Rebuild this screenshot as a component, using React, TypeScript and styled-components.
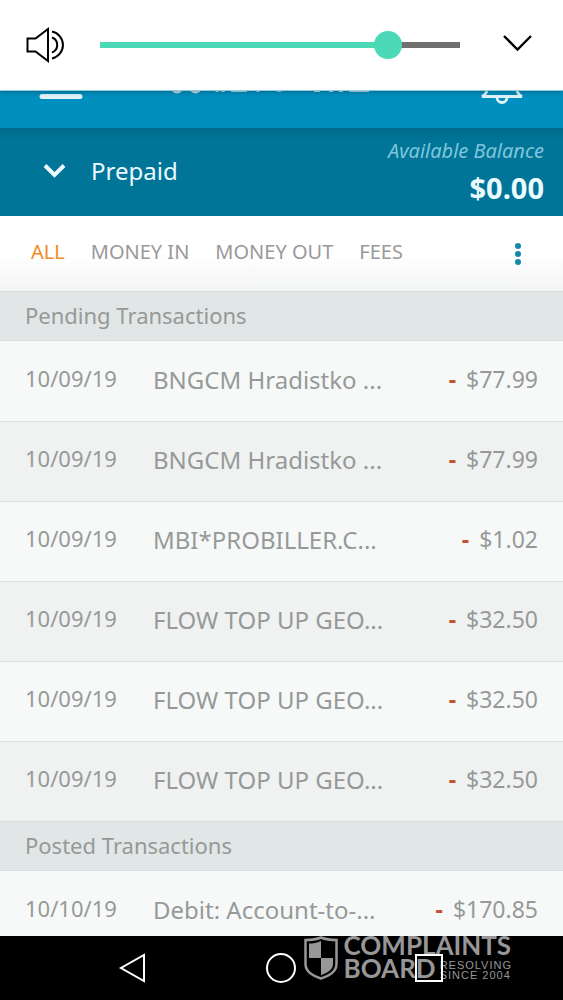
import React, { useState } from "react";
import styled, { createGlobalStyle } from "styled-components";

const GlobalStyle = createGlobalStyle`
  *, *::before, *::after { box-sizing: border-box; }
  body {
    margin: 0;
    background: #000;
    font-family: "Noto Sans", "Open Sans", sans-serif;
    color: #979998;
  }
  button { border: 0; padding: 0; background: none; font: inherit; color: inherit; cursor: pointer; }
  svg { display: block; }
`;

const Screen = styled.div`
  position: relative;
  display: flex;
  flex-direction: column;
  height: 100vh;
  overflow: hidden;
`;

const VolumePanel = styled.div`
  position: absolute;
  inset: 0 0 auto;
  z-index: 2;
  display: flex;
  align-items: center;
  height: 91px;
  padding: 0 30px 0 25px;
  background: #fff;
  border-bottom: 1px solid #8fcbdc;
  box-shadow: 0 1px 5px rgba(0, 40, 60, 0.4);
`;

const Slider = styled.input<{ $fill: number }>`
  flex: 1;
  min-width: 0;
  height: 28px;
  margin: 0 42px 0 35px;
  appearance: none;
  background: linear-gradient(to right, #4bdab5 ${(p) => p.$fill}%, #707070 ${(p) => p.$fill}%) center / 100% 6px no-repeat;
  &::-webkit-slider-thumb {
    appearance: none;
    width: 28px;
    height: 28px;
    border-radius: 50%;
    background: #4bd9b8;
  }
`;

const AppBar = styled.header`
  display: flex;
  align-items: flex-end;
  justify-content: space-between;
  flex: none;
  height: 128px;
  padding: 0 39px 23px;
  background: #0090bf;
  color: #e3f3fa;
`;

const BarButton = styled.button`
  flex: none;
`;

const Logo = styled.svg`
  flex: none;
  margin-right: 22px;
`;

const Account = styled.section`
  display: flex;
  align-items: center;
  flex: none;
  height: 88px;
  padding: 0 19px 0 43px;
  background: linear-gradient(#00698a, #007598 12px);
  color: #eafaff;
`;

const AccountPicker = styled.button`
  display: flex;
  align-items: center;
  gap: 24px;
  flex: 1;
  padding-bottom: 2px;
  font-size: 24px;
  line-height: 32px;
`;

const Balance = styled.div`
  padding-bottom: 2px;
  text-align: right;
`;

const BalanceLabel = styled.div`
  font-size: 20px;
  line-height: 34px;
  font-style: italic;
  color: #7fc6da;
`;

const BalanceValue = styled.div`
  font-size: 29px;
  line-height: 40px;
  font-weight: 700;
`;

const Tabs = styled.nav`
  display: flex;
  align-items: center;
  gap: 26px;
  flex: none;
  height: 75px;
  padding: 0 35px 0 31px;
  background: linear-gradient(#fff 50%, #f3f4f4);
`;

const Tab = styled.button<{ $active?: boolean }>`
  padding-bottom: 4px;
  font-size: 20px;
  line-height: 28px;
  white-space: nowrap;
  color: ${(p) => (p.$active ? "#f08c1e" : "#999")};
`;

const MoreButton = styled.button`
  margin-left: auto;
`;

const Content = styled.main`
  flex: 1;
  min-height: 0;
  overflow: hidden;
  background: #f6f9f8;
`;

const SectionTitle = styled.h2`
  display: flex;
  align-items: center;
  height: 50px;
  margin: 0;
  padding: 0 25px 3px;
  border: solid #d9dedf;
  border-width: 1px 0;
  background: #e1e6e6;
  font-size: 22px;
  font-weight: 400;
`;

const Table = styled.table`
  width: 100%;
  table-layout: fixed;
  border-collapse: collapse;
`;

const Row = styled.tr`
  height: 80px;
  background: #f6f9f8;
  &:nth-child(even) { background: #eff2f1; }
  & + & { box-shadow: inset 0 1px #dde1e0; }
`;

const DateCell = styled.td`
  width: 153px;
  padding: 0 0 6px 25px;
  font-size: 22px;
`;

const NameCell = styled.td`
  padding: 0 0 4px;
  font-size: 24px;
  white-space: nowrap;
`;

const AmountCell = styled.td`
  width: 160px;
  padding: 0 25px 4px 0;
  font-size: 23px;
  text-align: right;
  white-space: nowrap;
`;

const Minus = styled.span`
  margin-right: 10px;
  font-weight: 700;
  color: #c4502f;
`;

const SystemNav = styled.footer`
  position: relative;
  isolation: isolate;
  display: flex;
  justify-content: space-between;
  align-items: center;
  flex: none;
  height: 64px;
  padding: 0 118px;
  background: #000;
`;

const Watermark = styled.div`
  position: absolute;
  top: 0;
  right: 51px;
  z-index: -1;
  display: flex;
  gap: 6px;
  color: #979797;
  pointer-events: none;
`;

const WatermarkText = styled.div`
  margin-top: -2px;
  font-family: Lato, sans-serif;
  font-size: 26px;
  line-height: 23px;
  font-weight: 700;
`;

const WatermarkLine = styled.div`
  display: flex;
  align-items: center;
  gap: 4px;
`;

const Tagline = styled.div`
  padding-top: 2px;
  font-family: "Liberation Sans", sans-serif;
  font-size: 11px;
  line-height: 10px;
  font-weight: 400;
  letter-spacing: 1px;
`;

type Entry = { date: string; name: string; amount: string };

const pending: Entry[] = [
  { date: "10/09/19", name: "BNGCM Hradistko ...", amount: "$77.99" },
  { date: "10/09/19", name: "BNGCM Hradistko ...", amount: "$77.99" },
  { date: "10/09/19", name: "MBI*PROBILLER.C...", amount: "$1.02" },
  { date: "10/09/19", name: "FLOW TOP UP GEO...", amount: "$32.50" },
  { date: "10/09/19", name: "FLOW TOP UP GEO...", amount: "$32.50" },
  { date: "10/09/19", name: "FLOW TOP UP GEO...", amount: "$32.50" },
];

const posted: Entry[] = [{ date: "10/10/19", name: "Debit: Account-to-...", amount: "$170.85" }];

const tabs = ["ALL", "MONEY IN", "MONEY OUT", "FEES"];

function Transactions({ label, entries }: { label: string; entries: Entry[] }) {
  return (
    <section>
      <SectionTitle>{label}</SectionTitle>
      <Table aria-label={label}>
        <tbody>
          {entries.map((e, i) => (
            <Row key={i}>
              <DateCell>{e.date}</DateCell>
              <NameCell>{e.name}</NameCell>
              <AmountCell>
                <Minus>-</Minus>
                {e.amount}
              </AmountCell>
            </Row>
          ))}
        </tbody>
      </Table>
    </section>
  );
}

export default function App() {
  const [volume, setVolume] = useState(33);
  const [active, setActive] = useState("ALL");
  return (
    <>
      <GlobalStyle />
      <Screen>
        <VolumePanel>
          <svg width="40" height="36" viewBox="0 0 40 36" fill="none" stroke="#000" strokeWidth="2">
            <path d="M2.500 11.500H10.500L23 2V34L10.500 24.500H2.500Z" />
            <path d="M27 10.500A8 8 0 0 1 27 25.500M27 4.500A13.800 13.800 0 0 1 27 31.500" />
          </svg>
          <Slider
            type="range"
            aria-label="Volume"
            min={0}
            max={40}
            value={volume}
            $fill={4 + (volume / 40) * 92}
            onChange={(e) => setVolume(Number(e.target.value))}
          />
          <button aria-label="Expand">
            <svg width="31" height="22" viewBox="0 0 31 22" fill="none" stroke="#000" strokeWidth="2.400">
              <path d="M2 2L15.500 15.500L29 2" />
            </svg>
          </button>
        </VolumePanel>
        <AppBar>
          <BarButton aria-label="Menu">
            <svg width="44" height="36" viewBox="0 0 44 36" stroke="currentColor" strokeWidth="5" strokeLinecap="round">
              <path d="M3 4H41M3 16H41M3 27.500H41" />
            </svg>
          </BarButton>
          <Logo width="200" height="42" viewBox="0 0 200 42" fill="#c5e1ea" aria-hidden="true">
            <circle cx="6" cy="24" r="6.500" />
            <circle cx="24.500" cy="24" r="6.500" />
            <path
              d="M46 20V29M52 20V29M60 27.500H76M87 20V29M143 27.500H149M158 27.500H162M168 27.500H172M178 27.500H198"
              stroke="#c5e1ea"
              strokeWidth="3"
            />
            <circle cx="108" cy="23" r="6" />
          </Logo>
          <BarButton aria-label="Notifications">
            <svg width="44" height="42" viewBox="0 0 44 42" fill="none" stroke="currentColor" strokeWidth="2.800" strokeLinecap="round">
              <path d="M2 33.500H42C37 31 36 27 36 22V16C36 8 30 3 22 3S8 8 8 16V22C8 27 7 31 2 33.500ZM17 34.500A5 5 0 0 0 27 34.500" />
            </svg>
          </BarButton>
        </AppBar>
        <Account>
          <AccountPicker>
            <svg width="24" height="16" viewBox="0 0 24 16" fill="none" stroke="currentColor" strokeWidth="4">
              <path d="M2 2.500L11.500 12L21 2.500" />
            </svg>
            Prepaid
          </AccountPicker>
          <Balance>
            <BalanceLabel>Available Balance</BalanceLabel>
            <BalanceValue>$0.00</BalanceValue>
          </Balance>
        </Account>
        <Tabs>
          {tabs.map((t) => (
            <Tab key={t} $active={t === active} onClick={() => setActive(t)}>
              {t}
            </Tab>
          ))}
          <MoreButton aria-label="More">
            <svg width="20" height="24" viewBox="0 0 20 24" fill="#1489ab">
              <circle cx="10" cy="4" r="3" />
              <circle cx="10" cy="12" r="3" />
              <circle cx="10" cy="20" r="3" />
            </svg>
          </MoreButton>
        </Tabs>
        <Content>
          <Transactions label="Pending Transactions" entries={pending} />
          <Transactions label="Posted Transactions" entries={posted} />
        </Content>
        <SystemNav>
          <Watermark>
            <svg width="34" height="44" viewBox="0 0 34 44" fill="none" stroke="currentColor" strokeWidth="2.500">
              <path d="M17 1.500C12 3.500 7 4 1.500 4V28C1.500 36 9 40 17 42.500C25 40 32.500 36 32.500 28V4C27 4 22 3.500 17 1.500Z" />
              <path d="M17 5V22H5V7.500C9 7.500 13 7 17 5ZM17 22H29V28C29 34 23 37 17 39Z" fill="currentColor" stroke="none" />
            </svg>
            <WatermarkText>
              COMPLAINTS
              <WatermarkLine>
                BOARD
                <Tagline>
                  RESOLVING
                  <br />
                  SINCE 2004
                </Tagline>
              </WatermarkLine>
            </WatermarkText>
          </Watermark>
          <button aria-label="Back">
            <svg width="30" height="32" viewBox="0 0 30 32" fill="none" stroke="#fff" strokeWidth="2">
              <path d="M26 3V29L3 16Z" />
            </svg>
          </button>
          <button aria-label="Home">
            <svg width="32" height="32" viewBox="0 0 32 32" fill="none" stroke="#fff" strokeWidth="2">
              <circle cx="16" cy="16" r="14" />
            </svg>
          </button>
          <button aria-label="Recent apps">
            <svg width="32" height="32" viewBox="0 0 32 32" fill="none" stroke="#fff" strokeWidth="2">
              <path d="M3 3H29V29H3Z" />
            </svg>
          </button>
        </SystemNav>
      </Screen>
    </>
  );
}
